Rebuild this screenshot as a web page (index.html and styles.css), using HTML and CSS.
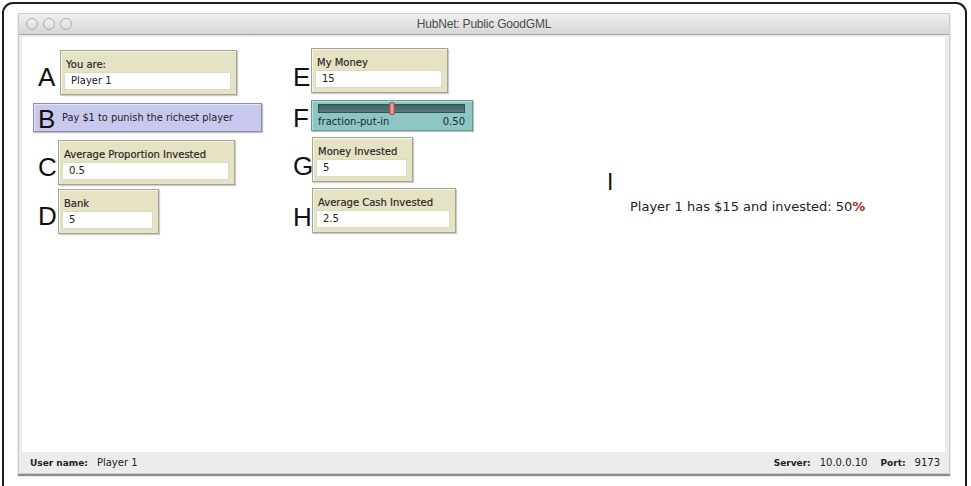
FILE: index.html
```html
<!DOCTYPE html>
<html>
<head>
<meta charset="utf-8">
<title>HubNet: Public GoodGML</title>
<link rel="stylesheet" href="styles.css">
</head>
<body>
<div class="frame">
  <div class="window">
    <div class="titlebar">
      <div class="lights">
        <span class="light"></span><span class="light"></span><span class="light"></span>
      </div>
      <div class="title">HubNet: Public GoodGML</div>
      <div></div>
    </div>
    <div class="main">
      <div class="panel">
        <div class="col col-left">
          <div class="row row-a">
            <span class="letter">A</span>
            <div class="monitor w-you">
              <div class="mlabel">You are:</div>
              <div class="mvalue">Player 1</div>
            </div>
          </div>
          <div class="button">
            <span class="letter letter-btn">B</span>
            <span class="btext">Pay $1 to punish the richest player</span>
          </div>
          <div class="row row-c">
            <span class="letter">C</span>
            <div class="monitor w-avgprop">
              <div class="mlabel">Average Proportion Invested</div>
              <div class="mvalue">0.5</div>
            </div>
          </div>
          <div class="row row-d">
            <span class="letter">D</span>
            <div class="monitor w-bank">
              <div class="mlabel">Bank</div>
              <div class="mvalue">5</div>
            </div>
          </div>
        </div>
        <div class="col col-mid">
          <div class="row">
            <span class="letter letter-mid">E</span>
            <div class="monitor w-money">
              <div class="mlabel">My Money</div>
              <div class="mvalue">15</div>
            </div>
          </div>
          <div class="row row-f">
            <span class="letter letter-mid letter-f">F</span>
            <div class="slider">
              <div class="track"><span class="thumb"></span></div>
              <div class="slabel"><span>fraction-put-in</span><span>0.50</span></div>
            </div>
          </div>
          <div class="row row-g">
            <span class="letter letter-mid">G</span>
            <div class="monitor w-invested">
              <div class="mlabel">Money Invested</div>
              <div class="mvalue">5</div>
            </div>
          </div>
          <div class="row row-h">
            <span class="letter letter-mid">H</span>
            <div class="monitor w-cash">
              <div class="mlabel">Average Cash Invested</div>
              <div class="mvalue">2.5</div>
            </div>
          </div>
        </div>
        <div class="col col-right">
          <div class="letter letter-i">I</div>
          <div class="message">Player 1 has $15 and invested: 50<span class="pct">%</span></div>
        </div>
      </div>
    </div>
    <div class="statusbar">
      <div class="sgroup"><b>User name:</b><span>Player 1</span></div>
      <div class="sgroup"><b>Server:</b><span>10.0.0.10</span><b class="port">Port:</b><span>9173</span></div>
    </div>
  </div>
</div>
</body>
</html>
```

FILE: styles.css
```css
html, body {
  margin: 0;
  background: #ffffff;
  overflow: hidden;
  height: 486px;
}
body {
  font-family: "DejaVu Sans", "Liberation Sans", sans-serif;
  color: #222;
}
.frame {
  box-sizing: border-box;
  margin: 2px 0 0 2px;
  width: 965px;
  height: 484px;
  border: 2px solid #1e1e1e;
  border-bottom: none;
  border-radius: 11px 11px 0 0;
  padding: 9px 0 0 14px;
}
.window {
  box-sizing: border-box;
  width: 932px;
  display: flex;
  flex-direction: column;
  background: #ececec;
  border: 1px solid #cdcdcd;
  box-shadow: 0 2px 1px rgba(0,0,0,0.45);
}
.titlebar {
  height: 20px;
  display: grid;
  grid-template-columns: 1fr auto 1fr;
  align-items: center;
  background: linear-gradient(#f0f0f0, #d6d6d6);
  border-bottom: 1px solid #a3a3a3;
}
.lights {
  display: flex;
  gap: 5px;
  padding-left: 7px;
}
.light {
  width: 10px;
  height: 10px;
  border-radius: 50%;
  border: 1px solid #ababab;
  background: linear-gradient(#f2f2f2, #dcdcdc);
}
.title {
  font-family: "Liberation Sans", sans-serif;
  font-size: 12px;
  color: #4d4d4d;
  letter-spacing: -0.2px;
}
.main {
  padding: 2px 4px 0 3px;
}
.panel {
  height: 415px;
  background: #ffffff;
  display: flex;
  align-items: flex-start;
  padding: 11px 0 0 11px;
  box-sizing: border-box;
}
.col {
  display: flex;
  flex-direction: column;
}
.col-left {
  width: 240px;
  margin-top: 2px;
  margin-right: 20px;
}
.col-mid {
  width: 202px;
}
.col-right {
  margin-left: 112px;
}
.row {
  display: flex;
  align-items: flex-end;
}
.row-a { padding-left: 5px; }
.row-c { margin-top: 8px; padding-left: 5px; }
.row-d { margin-top: 4px; padding-left: 5px; }
.row-f { margin-top: 7px; }
.row-g { margin-top: 6px; }
.row-h { margin-top: 6px; }
.letter {
  font-family: "Liberation Sans", sans-serif;
  font-size: 26px;
  line-height: 28px;
  width: 20px;
  color: #111;
  margin-bottom: 4px;
}
.letter-mid { width: 18px; margin-bottom: 2px; }
.letter-f { margin-bottom: -1px; }
.monitor {
  box-sizing: border-box;
  height: 45px;
  background: #e5e3c3;
  border: 1px solid #a6a58f;
  box-shadow: inset 1px 1px 0 #f6f5e4, 1px 1px 1px rgba(0,0,0,0.2);
  padding: 7px 5px 0 3px;
}
.w-you { width: 177px; margin-left: 2px; }
.w-avgprop { width: 177px; }
.w-bank { width: 101px; }
.w-money { width: 137px; }
.w-invested { width: 101px; margin-left: 1px; }
.w-cash { width: 144px; margin-left: 1px; }
.mlabel {
  font-size: 10px;
  line-height: 14px;
  height: 14px;
  padding-left: 2px;
  color: #2a2a2a;
  white-space: nowrap;
  -webkit-text-stroke: 0.2px #2a2a2a;
}
.mvalue {
  box-sizing: border-box;
  height: 18px;
  background: #ffffff;
  border: 1px solid #dcdbc6;
  font-size: 10px;
  line-height: 16px;
  padding-left: 6px;
  color: #222;
}
.button {
  box-sizing: border-box;
  width: 229px;
  height: 29px;
  margin-top: 8px;
  background: #c9c9ef;
  border: 1px solid #8e8eaa;
  box-shadow: inset 1px 1px 0 #e4e4fb, 1px 1px 1px rgba(0,0,0,0.25);
  display: flex;
  align-items: center;
  padding-left: 4px;
}
.letter-btn {
  width: 24px;
  margin-bottom: 0;
  margin-top: 2px;
}
.btext {
  font-size: 9.8px;
  color: #222;
  white-space: nowrap;
}
.slider {
  box-sizing: border-box;
  width: 162px;
  height: 31px;
  background: #8ec6c4;
  border: 1px solid #6b9896;
  box-shadow: inset 1px 1px 0 #b4dedd, 1px 1px 1px rgba(0,0,0,0.25);
  padding: 3px 7px 0 6px;
}
.track {
  height: 9px;
  background: linear-gradient(#3f6362, #567b7a);
  border: 1px solid #355251;
  box-sizing: border-box;
  display: flex;
  padding-left: 70px;
}
.thumb {
  width: 6px;
  height: 13px;
  margin-top: -3px;
  background: linear-gradient(90deg, #c86a6a, #f0a8a8 50%, #c86a6a);
  border: 1px solid #a45050;
  border-radius: 2px;
  box-sizing: border-box;
}
.slabel {
  display: flex;
  justify-content: space-between;
  font-size: 10px;
  line-height: 15px;
  color: #1e2a2a;
  margin-top: 1px;
}
.letter-i {
  font-size: 23px;
  line-height: 24px;
  width: auto;
  margin-top: 122px;
  margin-bottom: 0;
}
.message {
  margin-top: 5px;
  margin-left: 23px;
  font-family: "DejaVu Sans", sans-serif;
  font-size: 13px;
  line-height: 16px;
  color: #222;
  white-space: nowrap;
}
.pct {
  color: #b02424;
  font-weight: bold;
}
.statusbar {
  height: 21px;
  display: flex;
  justify-content: space-between;
  align-items: center;
  padding: 0 9px 0 11px;
  font-size: 10px;
  color: #222;
}
.sgroup {
  display: flex;
  align-items: baseline;
  gap: 9px;
}
.sgroup b {
  font-weight: bold;
  font-size: 9px;
}
.port {
  margin-left: 4px;
}
```
